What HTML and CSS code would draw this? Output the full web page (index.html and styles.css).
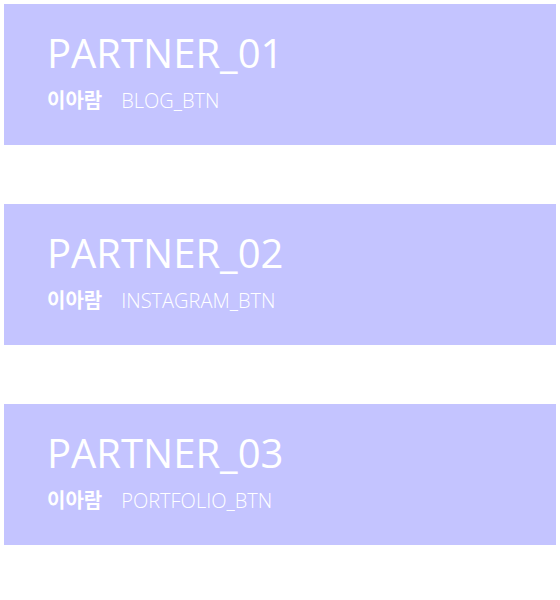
FILE: index.html
```html
<!DOCTYPE html>
<html lang="ko">
<head>
<meta charset="utf-8">
<link rel="stylesheet" href="styles.css">
</head>
<body>
<div class="list">
  <div class="card">
    <h2 class="title">PARTNER_01</h2>
    <div class="sub"><span class="name">이아람</span><span class="btn">BLOG_BTN</span></div>
  </div>
  <div class="card">
    <h2 class="title">PARTNER_02</h2>
    <div class="sub"><span class="name">이아람</span><span class="btn">INSTAGRAM_BTN</span></div>
  </div>
  <div class="card">
    <h2 class="title">PARTNER_03</h2>
    <div class="sub"><span class="name">이아람</span><span class="btn">PORTFOLIO_BTN</span></div>
  </div>
</div>
</body>
</html>
```

FILE: styles.css
```css
html, body { margin: 0; padding: 0; background: #fff; }
body { padding: 4px; font-family: "Open Sans", "Noto Sans CJK KR", sans-serif; }
.list { display: flex; flex-direction: column; gap: 59px; }
.card {
  background: #c4c4ff;
  height: 141px;
  box-sizing: border-box;
  padding: 22px 43px 0;
  color: #fff;
}
.title {
  margin: 0;
  font-size: 40px;
  font-weight: 400;
  line-height: 54px;
}
.sub {
  display: flex;
  align-items: baseline;
  gap: 19px;
  margin-top: 8px;
  font-size: 20px;
  line-height: 24px;
}
.name { font-weight: 700; font-size: 20px; font-family: "Noto Sans CJK KR", sans-serif; }
.btn { font-weight: 300; }
```
